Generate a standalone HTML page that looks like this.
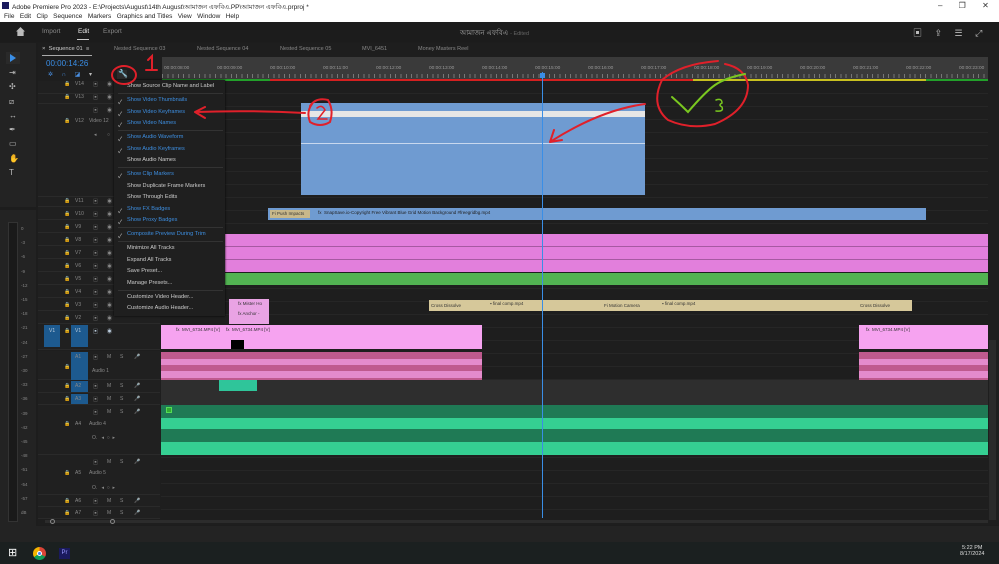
<!DOCTYPE html><html><head><meta charset="utf-8"><style>
*{margin:0;padding:0;box-sizing:border-box}
body{width:999px;height:564px;overflow:hidden;background:#1d1d1d;font-family:"Liberation Sans","Noto Sans CJK SC",sans-serif;position:relative;color:#aaa}
.a{position:absolute}
.t{font-size:6px;white-space:nowrap}
.mi{position:absolute;left:127px;font-size:5.6px;color:#ccc;white-space:nowrap}
.mi.b{color:#3d8ee0}
.ck{position:absolute;left:118px;font-size:6px;color:#bbb}
.sep{position:absolute;left:118px;width:105px;height:1px;background:#333}
.row{position:absolute;left:38px;width:122px;border-bottom:1px solid #2a2a2a;background:#202020}
.h{position:absolute;font-size:5px;color:#888;white-space:nowrap}
.h i{font-style:normal;position:absolute}
.h .l{left:0}.h .n{left:11px}.h .f{left:29px}.h .e{left:43px}.h .m{left:43px}.h .s{left:57px}.h .mc{left:70px}
</style></head><body>
<!-- title -->
<div class="a" style="left:0;top:0;width:999px;height:22px;background:#fff"></div>
<div class="a" style="left:2px;top:2px;width:7px;height:7px;background:#1a1a5e"></div>
<div class="a t" style="left:12px;top:2px;color:#222;font-size:6.5px">Adobe Premiere Pro 2023 - E:\Projects\August\14th August\আমাজন এফবিএ.PP\আমাজন এফবিএ.prproj *</div>
<div class="a t" style="left:4px;top:13px;color:#222;font-size:6.5px">File&nbsp;&nbsp; Edit&nbsp;&nbsp; Clip&nbsp;&nbsp; Sequence&nbsp;&nbsp; Markers&nbsp;&nbsp; Graphics and Titles&nbsp;&nbsp; View&nbsp;&nbsp; Window&nbsp;&nbsp; Help</div>
<div class="a t" style="left:938px;top:1px;color:#333;font-size:8px;word-spacing:14px">– ❐ ✕</div>
<!-- header -->
<div class="a" style="left:0;top:22px;width:999px;height:20px;background:#1c1c1c"></div>
<div class="a" style="left:16px;top:27px;width:9px;height:9px;background:#bbb;clip-path:polygon(50% 0,100% 50%,85% 50%,85% 100%,15% 100%,15% 50%,0 50%)"></div>
<div class="a t" style="left:42px;top:28px;font-size:6.5px;color:#888">Import</div>
<div class="a t" style="left:78px;top:28px;font-size:6.5px;color:#eee">Edit</div>
<div class="a" style="left:77px;top:39px;width:12px;height:1px;background:#ccc"></div>
<div class="a t" style="left:103px;top:28px;font-size:6.5px;color:#888">Export</div>
<div class="a t" style="left:460px;top:27px;font-size:7px;color:#aaa">আমাজন এফবিএ <span style="color:#666;font-size:5.5px">- Edited</span></div>
<div class="a t" style="left:913px;top:26px;font-size:9px;color:#bbb;word-spacing:10px">▣ ⇪ ☰ ⤢</div>
<!-- left tools -->
<div class="a" style="left:0;top:43px;width:36px;height:164px;background:#232323"></div>
<div class="a" style="left:0;top:210px;width:36px;height:316px;background:#232323"></div>
<div class="a" style="left:6px;top:52px;width:14px;height:12px;background:#2a2a2a"></div>
<div class="a" style="left:10px;top:54px;width:0;height:0;border-left:6px solid #3a8ee6;border-top:4px solid transparent;border-bottom:4px solid transparent"></div>
<div class="a t" style="left:9px;top:66px;color:#bbb;font-size:8px;line-height:14.3px">⇥<br>✣<br>⧄<br>↔<br>✒<br>▭<br>✋<br>T</div>
<div class="a" style="left:8px;top:222px;width:10px;height:300px;background:#1a1a1a;border:1px solid #333"></div>
<div class="a t" style="left:21px;top:222px;font-size:4.5px;line-height:14.2px;color:#888">0<br>-3<br>-6<br>-9<br>-12<br>-15<br>-18<br>-21<br>-24<br>-27<br>-30<br>-33<br>-36<br>-39<br>-42<br>-45<br>-48<br>-51<br>-54<br>-57<br>dB</div>
<!-- timeline panel -->
<div class="a" style="left:38px;top:43px;width:961px;height:482px;background:#1e1e1e"></div>
<div class="a t" style="left:42px;top:46px;font-size:5.8px;color:#ccc">× &nbsp;Sequence 01 &nbsp;≡</div>
<div class="a" style="left:42px;top:55px;width:50px;height:1px;background:#aaa"></div>
<div class="a t" style="left:114px;top:46px;font-size:5.5px;color:#888">Nested Sequence 03</div>
<div class="a t" style="left:197px;top:46px;font-size:5.5px;color:#888">Nested Sequence 04</div>
<div class="a t" style="left:280px;top:46px;font-size:5.5px;color:#888">Nested Sequence 05</div>
<div class="a t" style="left:362px;top:46px;font-size:5.5px;color:#888">MVI_6451</div>
<div class="a t" style="left:418px;top:46px;font-size:5.5px;color:#888">Money Masters Reel</div>
<div class="a t" style="left:46px;top:59px;font-size:8px;color:#3a8ee6">00:00:14:26</div>
<div class="a t" style="left:48px;top:71px;font-size:6px;color:#4a90e2;word-spacing:7px">✲ ∩ ◪ <span style="color:#bbb">▾</span></div>
<div class="a" style="left:117px;top:70px;width:10px;height:9px;background:#2b2b2b"></div>
<div class="a t" style="left:118px;top:69px;font-size:8px;color:#3a8ee6">🔧</div>
<!-- ruler -->
<div class="a" style="left:162px;top:57px;width:826px;height:22px;background:#3a3a3a"></div>
<div class="a t" style="left:164px;top:66px;font-size:4.8px;color:#999">
<span style="position:absolute;left:0">00:00:08:00</span><span style="position:absolute;left:53px">00:00:09:00</span><span style="position:absolute;left:106px">00:00:10:00</span><span style="position:absolute;left:159px">00:00:11:00</span><span style="position:absolute;left:212px">00:00:12:00</span><span style="position:absolute;left:265px">00:00:13:00</span><span style="position:absolute;left:318px">00:00:14:00</span><span style="position:absolute;left:371px">00:00:15:00</span><span style="position:absolute;left:424px">00:00:16:00</span><span style="position:absolute;left:477px">00:00:17:00</span><span style="position:absolute;left:530px">00:00:18:00</span><span style="position:absolute;left:583px">00:00:19:00</span><span style="position:absolute;left:636px">00:00:20:00</span><span style="position:absolute;left:689px">00:00:21:00</span><span style="position:absolute;left:742px">00:00:22:00</span><span style="position:absolute;left:795px">00:00:23:00</span></div>
<div class="a" style="left:162px;top:74px;width:826px;height:4px;background:repeating-linear-gradient(90deg,#777 0 1px,transparent 1px 5.3px)"></div>
<div class="a" style="left:162px;top:79px;width:108px;height:2px;background:#22a02a"></div>
<div class="a" style="left:270px;top:79px;width:423px;height:2px;background:#d42020"></div>
<div class="a" style="left:693px;top:79px;width:233px;height:2px;background:#c8c020"></div>
<div class="a" style="left:926px;top:79px;width:62px;height:2px;background:#22a02a"></div>
<!-- track headers -->
<div class="row" style="top:81px;height:13px"></div><div class="row" style="top:94px;height:10px"></div>
<div class="row" style="top:104px;height:93px"></div>
<div class="row" style="top:197px;height:10px"></div><div class="row" style="top:207px;height:13px"></div>
<div class="row" style="top:220px;height:13px"></div><div class="row" style="top:233px;height:13px"></div>
<div class="row" style="top:246px;height:13px"></div><div class="row" style="top:259px;height:13px"></div>
<div class="row" style="top:272px;height:13px"></div><div class="row" style="top:285px;height:13px"></div>
<div class="row" style="top:298px;height:13px"></div><div class="row" style="top:311px;height:13px"></div>
<div class="row" style="top:324px;height:26px"></div>
<div class="row" style="top:351px;height:29px"></div><div class="row" style="top:380px;height:13px"></div>
<div class="row" style="top:393px;height:12px"></div><div class="row" style="top:405px;height:50px"></div>
<div class="row" style="top:455px;height:40px"></div><div class="row" style="top:495px;height:12px"></div>
<div class="row" style="top:507px;height:12px"></div>
<div class="a" style="left:44px;top:325px;width:16px;height:22px;background:#1d5a8f"></div>
<div class="a" style="left:71px;top:325px;width:17px;height:22px;background:#1d5a8f"></div>
<div class="a" style="left:71px;top:352px;width:17px;height:28px;background:#1d5a8f"></div>
<div class="a" style="left:71px;top:381px;width:17px;height:11px;background:#1d5a8f"></div>
<div class="a" style="left:71px;top:394px;width:17px;height:10px;background:#1d5a8f"></div>
<div class="h" style="left:64px;top:81px"><i class="l">🔒</i><i class="n">V14</i><i class="f">▣</i><i class="e">◉</i></div>
<div class="h" style="left:64px;top:94px"><i class="l">🔒</i><i class="n">V13</i><i class="f">▣</i><i class="e">◉</i></div>
<div class="h" style="left:64px;top:107px"><i class="f">▣</i><i class="e">◉</i></div>
<div class="h" style="left:64px;top:118px"><i class="l">🔒</i><i class="n">V12</i><i class="f" style="left:25px">Video 12</i></div>
<div class="h" style="left:64px;top:132px"><i class="f" style="left:30px">◂</i><i class="e">○</i></div>
<div class="h" style="left:64px;top:198px"><i class="l">🔒</i><i class="n">V11</i><i class="f">▣</i><i class="e">◉</i></div>
<div class="h" style="left:64px;top:211px"><i class="l">🔒</i><i class="n">V10</i><i class="f">▣</i><i class="e">◉</i></div>
<div class="h" style="left:64px;top:224px"><i class="l">🔒</i><i class="n">V9</i><i class="f">▣</i><i class="e">◉</i></div>
<div class="h" style="left:64px;top:237px"><i class="l">🔒</i><i class="n">V8</i><i class="f">▣</i><i class="e">◉</i></div>
<div class="h" style="left:64px;top:250px"><i class="l">🔒</i><i class="n">V7</i><i class="f">▣</i><i class="e">◉</i></div>
<div class="h" style="left:64px;top:263px"><i class="l">🔒</i><i class="n">V6</i><i class="f">▣</i><i class="e">◉</i></div>
<div class="h" style="left:64px;top:276px"><i class="l">🔒</i><i class="n">V5</i><i class="f">▣</i><i class="e">◉</i></div>
<div class="h" style="left:64px;top:289px"><i class="l">🔒</i><i class="n">V4</i><i class="f">▣</i><i class="e">◉</i></div>
<div class="h" style="left:64px;top:302px"><i class="l">🔒</i><i class="n">V3</i><i class="f">▣</i><i class="e">◉</i></div>
<div class="h" style="left:64px;top:315px"><i class="l">🔒</i><i class="n">V2</i><i class="f">▣</i><i class="e">◉</i></div>
<div class="h" style="left:64px;top:328px;color:#bcd"><i class="l" style="left:-15px">V1</i><i class="l">🔒</i><i class="n">V1</i><i class="f">▣</i><i class="e">◉</i></div>
<div class="h" style="left:64px;top:354px"><i class="n">A1</i><i class="f">▣</i><i class="m">M</i><i class="s" style="left:56px">S</i><i class="mc">🎤</i></div>
<div class="h" style="left:64px;top:364px"><i class="l">🔒</i></div>
<div class="h" style="left:92px;top:368px">Audio 1</div>
<div class="h" style="left:64px;top:383px"><i class="l">🔒</i><i class="n">A2</i><i class="f">▣</i><i class="m">M</i><i class="s" style="left:56px">S</i><i class="mc">🎤</i></div>
<div class="h" style="left:64px;top:396px"><i class="l">🔒</i><i class="n">A3</i><i class="f">▣</i><i class="m">M</i><i class="s" style="left:56px">S</i><i class="mc">🎤</i></div>
<div class="h" style="left:64px;top:409px"><i class="f">▣</i><i class="m">M</i><i class="s" style="left:56px">S</i><i class="mc">🎤</i></div>
<div class="h" style="left:64px;top:421px"><i class="l">🔒</i><i class="n">A4</i><i class="f" style="left:25px">Audio 4</i></div>
<div class="h" style="left:92px;top:435px">O. &nbsp;&nbsp;◂ &nbsp;○ &nbsp;▸</div>
<div class="h" style="left:64px;top:459px"><i class="f">▣</i><i class="m">M</i><i class="s" style="left:56px">S</i><i class="mc">🎤</i></div>
<div class="h" style="left:64px;top:470px"><i class="l">🔒</i><i class="n">A5</i><i class="f" style="left:25px">Audio 5</i></div>
<div class="h" style="left:92px;top:485px">O. &nbsp;&nbsp;◂ &nbsp;○ &nbsp;▸</div>
<div class="h" style="left:64px;top:498px"><i class="l">🔒</i><i class="n">A6</i><i class="f">▣</i><i class="m">M</i><i class="s" style="left:56px">S</i><i class="mc">🎤</i></div>
<div class="h" style="left:64px;top:510px"><i class="l">🔒</i><i class="n">A7</i><i class="f">▣</i><i class="m">M</i><i class="s" style="left:56px">S</i><i class="mc">🎤</i></div>
<!-- track area -->
<div class="a" style="left:161px;top:81px;width:827px;height:438px;background:repeating-linear-gradient(180deg,#1e1e1e 0 12px,#262626 12px 13px)"></div>
<div class="a" style="left:161px;top:380px;width:827px;height:25px;background:#2e2e2e"></div>
<!-- clips -->
<div class="a" style="left:301px;top:103px;width:344px;height:92px;background:#6f9bd1"></div>
<div class="a" style="left:301px;top:111px;width:344px;height:6px;background:#e6e6e6"></div>
<div class="a" style="left:301px;top:143px;width:344px;height:1px;background:#c8d8ee"></div>
<div class="a" style="left:268px;top:208px;width:658px;height:12px;background:#6f9bd1"></div>
<div class="a" style="left:270px;top:210px;width:40px;height:8px;background:#c8b88a"></div>
<div class="a t" style="left:272px;top:211px;font-size:4.5px;color:#333">Fi Push Impacts</div>
<div class="a t" style="left:318px;top:210px;font-size:4.5px;color:#222">fx &nbsp;SnapSave.io-Copyright Free Vibrant Blue Grid Motion Background #freegridbg.mp4</div>
<div class="a" style="left:225px;top:234px;width:763px;height:38px;background:#e27fdc"></div>
<div class="a" style="left:225px;top:246px;width:763px;height:1px;background:#a659a2"></div>
<div class="a" style="left:225px;top:259px;width:763px;height:1px;background:#a659a2"></div>
<div class="a" style="left:225px;top:273px;width:763px;height:12px;background:#52b352"></div>
<div class="a" style="left:229px;top:299px;width:40px;height:25px;background:#e9a3e4"></div>
<div class="a t" style="left:238px;top:301px;font-size:4.5px;color:#333">fx Mister Ho<br><br>fx Anchor -</div>
<div class="a" style="left:429px;top:300px;width:483px;height:11px;background:#d6c89a"></div>
<div class="a t" style="left:431px;top:303px;font-size:4.5px;color:#333">Cross Dissolve</div>
<div class="a t" style="left:490px;top:301px;font-size:4.5px;color:#333">▪ final comp.mp4</div>
<div class="a t" style="left:604px;top:303px;font-size:4.5px;color:#333">Fi Motion Camera</div>
<div class="a t" style="left:662px;top:301px;font-size:4.5px;color:#333">▪ final comp.mp4</div>
<div class="a t" style="left:860px;top:303px;font-size:4.5px;color:#333">Cross Dissolve</div>
<div class="a" style="left:161px;top:325px;width:321px;height:24px;background:#f6a3f0"></div>
<div class="a" style="left:859px;top:325px;width:129px;height:24px;background:#f6a3f0"></div>
<div class="a" style="left:231px;top:340px;width:13px;height:9px;background:#000"></div>
<div class="a t" style="left:176px;top:327px;font-size:4.5px;color:#333">fx &nbsp;MVI_6734.MP4 [V] &nbsp;&nbsp;&nbsp;&nbsp;fx &nbsp;MVI_6734.MP4 [V]</div>
<div class="a t" style="left:866px;top:327px;font-size:4.5px;color:#333">fx &nbsp;MVI_6734.MP4 [V]</div>
<div class="a" style="left:161px;top:352px;width:321px;height:28px;background:#bf5a8e"></div>
<div class="a" style="left:859px;top:352px;width:129px;height:28px;background:#bf5a8e"></div>
<div class="a" style="left:161px;top:359px;width:321px;height:6px;background:#e48bcc"></div>
<div class="a" style="left:161px;top:371px;width:321px;height:7px;background:#e48bcc"></div>
<div class="a" style="left:859px;top:359px;width:129px;height:6px;background:#e48bcc"></div>
<div class="a" style="left:859px;top:371px;width:129px;height:7px;background:#e48bcc"></div>
<div class="a" style="left:219px;top:380px;width:38px;height:11px;background:#2fc59a"></div>
<div class="a" style="left:161px;top:405px;width:827px;height:50px;background:#1f7a55"></div>
<div class="a" style="left:161px;top:418px;width:827px;height:11px;background:#35cf92"></div>
<div class="a" style="left:161px;top:442px;width:827px;height:13px;background:#35cf92"></div>
<div class="a" style="left:166px;top:407px;width:6px;height:6px;background:#3a3;border:1px solid #5d5"></div>
<!-- playhead -->
<div class="a" style="left:542px;top:72px;width:1px;height:446px;background:#3a8ee6"></div>
<div class="a" style="left:540px;top:73px;width:5px;height:5px;background:#3a8ee6"></div>
<!-- scroll bars -->
<div class="a" style="left:45px;top:520px;width:943px;height:3px;background:#2c2c2c"></div>
<div class="a" style="left:50px;top:519px;width:5px;height:5px;border:1px solid #888;border-radius:50%"></div>
<div class="a" style="left:110px;top:519px;width:5px;height:5px;border:1px solid #888;border-radius:50%"></div>
<div class="a" style="left:989px;top:340px;width:7px;height:180px;background:#2a2a2a"></div>
<div class="a" style="left:0;top:526px;width:999px;height:16px;background:#232323"></div>
<!-- menu -->
<div class="a" style="left:114px;top:80px;width:111px;height:236px;background:#1f1f1f;box-shadow:0 0 2px #000"></div>
<div class="mi" style="top:83px">Show Source Clip Name and Label</div>
<div class="sep" style="top:93px"></div>
<div class="ck" style="top:97px">✓</div><div class="mi b" style="top:97px">Show Video Thumbnails</div>
<div class="ck" style="top:109px">✓</div><div class="mi b" style="top:109px">Show Video Keyframes</div>
<div class="ck" style="top:120px">✓</div><div class="mi b" style="top:120px">Show Video Names</div>
<div class="sep" style="top:130px"></div>
<div class="ck" style="top:134px">✓</div><div class="mi b" style="top:134px">Show Audio Waveform</div>
<div class="ck" style="top:146px">✓</div><div class="mi b" style="top:146px">Show Audio Keyframes</div>
<div class="mi" style="top:157px">Show Audio Names</div>
<div class="sep" style="top:167px"></div>
<div class="ck" style="top:171px">✓</div><div class="mi b" style="top:171px">Show Clip Markers</div>
<div class="mi" style="top:183px">Show Duplicate Frame Markers</div>
<div class="mi" style="top:194px">Show Through Edits</div>
<div class="ck" style="top:206px">✓</div><div class="mi b" style="top:206px">Show FX Badges</div>
<div class="ck" style="top:217px">✓</div><div class="mi b" style="top:217px">Show Proxy Badges</div>
<div class="sep" style="top:227px"></div>
<div class="ck" style="top:231px">✓</div><div class="mi b" style="top:231px">Composite Preview During Trim</div>
<div class="sep" style="top:241px"></div>
<div class="mi" style="top:245px">Minimize All Tracks</div>
<div class="mi" style="top:257px">Expand All Tracks</div>
<div class="mi" style="top:268px">Save Preset...</div>
<div class="mi" style="top:280px">Manage Presets...</div>
<div class="sep" style="top:290px"></div>
<div class="mi" style="top:294px">Customize Video Header...</div>
<div class="mi" style="top:305px">Customize Audio Header...</div>
<!-- annotations -->
<svg class="a" style="left:0;top:0" width="999" height="564" fill="none" stroke-linecap="round">
<ellipse cx="124" cy="75" rx="12" ry="9" stroke="#e0202a" stroke-width="2"/>
<path d="M148 60 L152 56 L152 70 M146 70 H157" stroke="#e0202a" stroke-width="2"/>
<path d="M310 106 Q316 97 328 100 Q334 110 330 122 Q320 128 310 122 Q306 112 312 104" stroke="#e0202a" stroke-width="2"/>
<path d="M317 108 Q322 104 325 110 L318 119 H327" stroke="#e0202a" stroke-width="1.5"/>
<path d="M305 113 Q250 110 195 112 M195 112 L205 107 M195 112 L205 118" stroke="#e0202a" stroke-width="2"/>
<path d="M645 104 Q600 110 550 142 M550 142 L554 130 M550 142 L562 140" stroke="#e0202a" stroke-width="2"/>
<path d="M718 61 Q680 64 662 80 Q650 105 668 120 Q690 130 715 124 Q748 110 748 85 Q745 68 725 64" stroke="#e0202a" stroke-width="2"/>
<path d="M672 97 Q680 104 688 112 Q705 92 715 85 Q725 78 745 74" stroke="#7ac820" stroke-width="2"/>
<path d="M716 100 Q722 98 722 103 Q718 105 722 107 Q724 112 716 111" stroke="#7ac820" stroke-width="1.5"/>
</svg>
<!-- taskbar -->
<div class="a" style="left:0;top:542px;width:999px;height:22px;background:#1b2020"></div>
<div class="a t" style="left:8px;top:546px;font-size:11px;color:#fff">⊞</div>
<div class="a" style="left:33px;top:547px;width:13px;height:13px;border-radius:50%;background:conic-gradient(#db4437 0 33%,#0f9d58 0 66%,#f4b400 0)"></div>
<div class="a" style="left:37px;top:551px;width:5px;height:5px;border-radius:50%;background:#4285f4;border:1px solid #fff"></div>
<div class="a" style="left:59px;top:548px;width:11px;height:11px;background:#1a1a5e;color:#99f;font-size:6px;text-align:center;line-height:11px">Pr</div>
<div class="a t" style="left:960px;top:545px;font-size:5.5px;color:#ddd;text-align:center">5:22 PM<br>8/17/2024</div>
</body></html>
